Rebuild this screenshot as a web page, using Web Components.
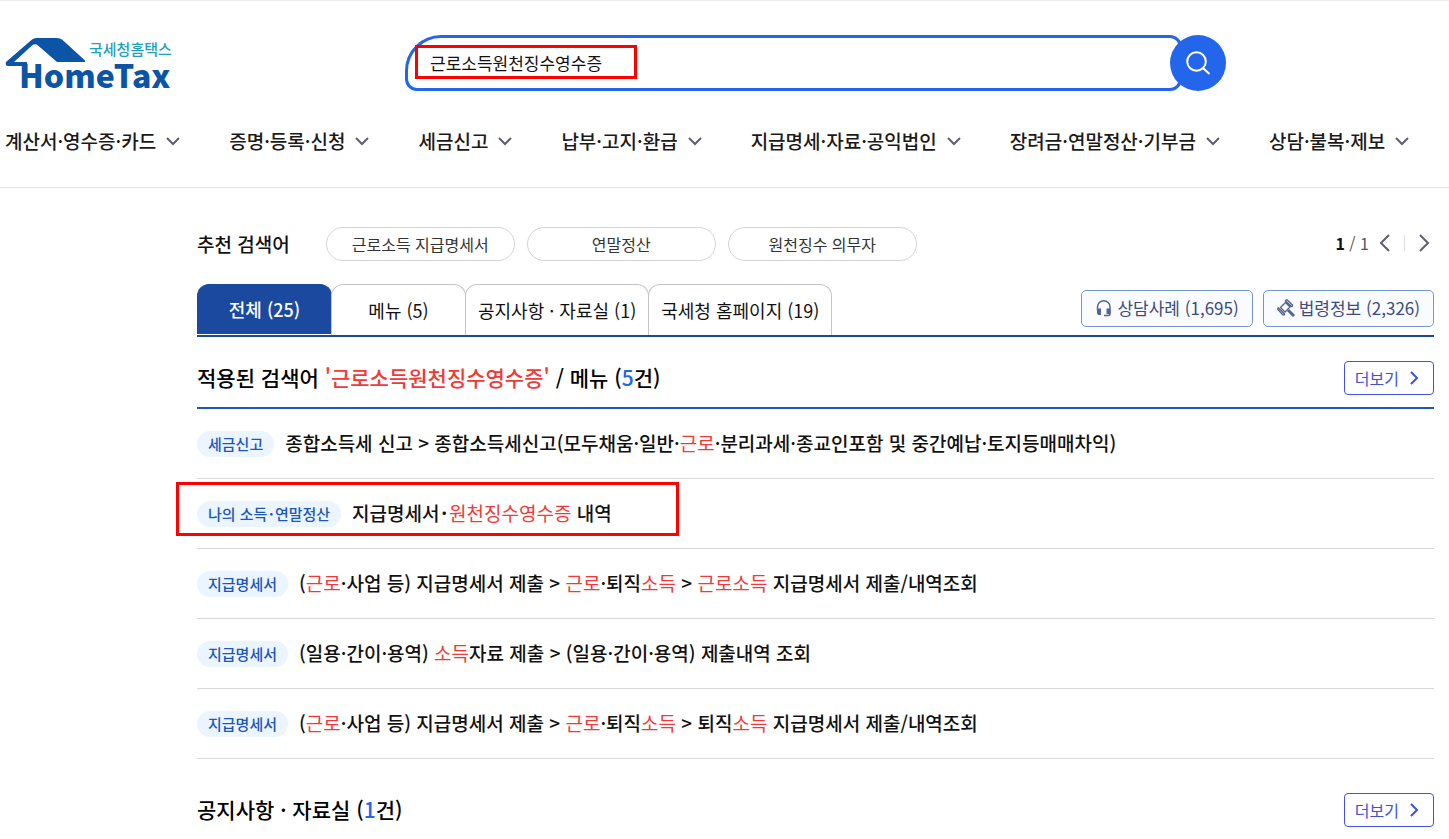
<!DOCTYPE html>
<html lang="ko">
<head>
<meta charset="utf-8">
<meta name="viewport" content="width=device-width, initial-scale=1">
<title>국세청 홈택스 - 통합검색</title>
<style>
  body {
    margin: 0;
    background: #fff;
    color: #111;
    font-family: "Noto Sans CJK KR", sans-serif;
    --blue: #2366eb;
    --navy: #1c49a0;
    --red: #f33838;
  }
</style>
</head>
<body>
<tax-header></tax-header>
<search-page></search-page>

<script>
const define = (name, html, setup) => {
  const template = document.createElement("template");
  template.innerHTML = html;

  customElements.define(name, class extends HTMLElement {
    connectedCallback() {
      if (this.shadowRoot) return;
      this.attachShadow({ mode: "open" });
      this.shadowRoot.append(template.content.cloneNode(true));
      if (setup) setup(this, this.shadowRoot);
    }
  });
};

define("tax-chevron", `
  <style>
    :host { display: inline-flex; --size: 18px; }
    :host([large]) { --size: 24px; }
    svg { display: block; width: var(--size); height: var(--size); fill: none; stroke: currentColor; stroke-width: 2; }
    path { vector-effect: non-scaling-stroke; }
    :host([dir-to="left"]) svg { transform: rotate(90deg); }
    :host([dir-to="right"]) svg { transform: rotate(-90deg); }
  </style>
  <svg viewBox="0 0 18 18" aria-hidden="true"><path d="M3 6l6 6 6-6"/></svg>
`);

define("tax-logo", `
  <style>
    :host { display: block; }
    a { display: block; }
    svg { display: block; width: 176px; height: 56px; overflow: visible; }
    .ko { font-size: 15px; font-weight: 500; fill: #1f9fbd; }
    .en { font-size: 32px; font-weight: 900; fill: #0c54a5; }
  </style>
  <a href="#" aria-label="국세청홈택스 HomeTax">
    <svg viewBox="0 0 176 56">
      <path fill="#0c54a5" d="M6 27L32 4.500Q34 3 36 3H57Q60 3 62 4.500L84.500 25Q86 27 84 27H57L38 10.500Q35 8 32 10.500L14 27H27V31H7.500Q5 30 6 27Z"/>
      <text class="ko" x="89" y="20">국세청홈택스</text>
      <text class="en" x="19" y="53">HomeTax</text>
    </svg>
  </a>
`);

define("search-box", `
  <style>
    :host { display: flex; position: relative; }
    form { display: flex; flex: 1; align-items: center; }
    input {
      box-sizing: border-box;
      flex: 1;
      min-width: 0;
      height: 56px;
      padding: 0 22px 2px;
      border: 3px solid var(--blue);
      border-radius: 36px 12px 12px 12px;
      outline: 0;
      background: #fff;
      color: #111;
      font: 400 17px/24px "Noto Sans CJK KR", sans-serif;
    }
    button {
      display: grid;
      place-items: center;
      width: 56px;
      height: 56px;
      margin-left: -12px;
      padding: 0;
      border: 0;
      border-radius: 50%;
      background: var(--blue);
    }
    svg { width: 28px; height: 28px; fill: none; stroke: #fff; stroke-width: 2; }
    .mark {
      position: absolute;
      box-sizing: border-box;
      top: 10px;
      left: 10px;
      width: 222px;
      height: 34px;
      border: 3px solid #f00;
      pointer-events: none;
    }
  </style>
  <form>
    <input type="text" aria-label="통합검색" value="근로소득원천징수영수증">
    <button type="button" aria-label="검색">
      <svg viewBox="0 0 28 28"><circle cx="12.500" cy="12.500" r="9.300"/><path d="M19 19l6.500 6"/></svg>
    </button>
  </form>
  <span class="mark"></span>
`);

define("nav-item", `
  <style>
    :host { display: block; }
    button {
      display: flex;
      align-items: center;
      gap: 8px;
      padding: 0;
      border: 0;
      background: none;
      color: #1a1a1a;
      font: 500 19px/28px "Noto Sans CJK KR", sans-serif;
      white-space: nowrap;
    }
    tax-chevron { color: #5d5f6e; }
  </style>
  <button type="button"><slot></slot><tax-chevron></tax-chevron></button>
`);

define("tax-header", `
  <style>
    :host { display: block; border-top: 1px solid #eee; border-bottom: 1px solid #e2e2e2; }
    .top {
      display: grid;
      grid-template-columns: 405px minmax(0, 821px) 1fr;
      align-items: center;
      padding-top: 34px;
    }
    nav {
      display: flex;
      gap: 47px;
      padding: 36px 5px 32px;
    }
  </style>
  <header>
    <div class="top">
      <tax-logo></tax-logo>
      <search-box></search-box>
    </div>
    <nav>
      <nav-item>계산서·영수증·카드</nav-item>
      <nav-item>증명·등록·신청</nav-item>
      <nav-item>세금신고</nav-item>
      <nav-item>납부·고지·환급</nav-item>
      <nav-item>지급명세·자료·공익법인</nav-item>
      <nav-item>장려금·연말정산·기부금</nav-item>
      <nav-item>상담·불복·제보</nav-item>
    </nav>
  </header>
`);

define("keyword-bar", `
  <style>
    :host { display: flex; align-items: center; gap: 12px; }
    h2 { margin: 0 24px 0 0; font-size: 19px; font-weight: 500; line-height: 28px; }
    .chip {
      box-sizing: border-box;
      width: 189px;
      height: 34px;
      border: 1px solid #d3d4d6;
      border-radius: 17px;
      background: #fff;
      color: #333;
      font: 400 16px/24px "Noto Sans CJK KR", sans-serif;
    }
    .pager { display: flex; align-items: center; margin: 0 -2px 2px auto; font-size: 16px; line-height: 24px; color: #555; }
    .pager b { color: #111; }
    .pager button { display: flex; padding: 0; border: 0; background: none; color: #5d5f6e; }
    .pager span { margin-right: 4px; }
    .pager i { width: 1px; height: 16px; margin: 0 7px; background: #ddd; }
  </style>
  <h2>추천 검색어</h2>
  <button class="chip" type="button">근로소득 지급명세서</button>
  <button class="chip" type="button">연말정산</button>
  <button class="chip" type="button">원천징수 의무자</button>
  <div class="pager">
    <span><b>1</b> / 1</span>
    <button type="button" aria-label="이전"><tax-chevron large dir-to="left"></tax-chevron></button>
    <i></i>
    <button type="button" aria-label="다음"><tax-chevron large dir-to="right"></tax-chevron></button>
  </div>
`);

define("result-tabs", `
  <style>
    :host { display: flex; align-items: flex-end; border-bottom: 2px solid var(--navy); }
    .tabs { display: flex; }
    .tabs button {
      box-sizing: border-box;
      min-width: 135px;
      height: 51px;
      margin-right: -1px;
      padding: 0 12px 1px;
      border: 1px solid #c4c4c4;
      border-bottom: 0;
      border-radius: 12px 12px 0 0;
      background: #fff;
      color: #111;
      font: 400 18px/28px "Noto Sans CJK KR", sans-serif;
      white-space: nowrap;
    }
    .tabs button[aria-selected="true"] {
      height: 50px;
      border-color: var(--navy);
      background: var(--navy);
      color: #fff;
      font-weight: 500;
    }
    .links { display: flex; gap: 10px; margin: 0 0 8px auto; }
    .links a {
      display: flex;
      align-items: center;
      gap: 4px;
      padding: 4px 13px 6px;
      border: 1px solid #7397cd;
      border-radius: 5px;
      background: #f9fbff;
      color: #3d4c7c;
      font-size: 17px;
      line-height: 25px;
      text-decoration: none;
      white-space: nowrap;
    }
    svg { width: 18px; height: 18px; fill: none; stroke: #536493; stroke-width: 2; }
  </style>
  <div class="tabs" role="tablist">
    <button type="button" role="tab" aria-selected="true">전체 (25)</button>
    <button type="button" role="tab">메뉴 (5)</button>
    <button type="button" role="tab">공지사항 · 자료실 (1)</button>
    <button type="button" role="tab">국세청 홈페이지 (19)</button>
  </div>
  <div class="links">
    <a href="#">
      <svg viewBox="0 0 18 18"><path d="M2.500 11V8a6 6 0 0 1 12.500 0v7q0 1.500-1.500 1.500H9" stroke-width="1.500"/><path d="M2 9.500H6V16H4Q2 16 2 14ZM11.500 9.500H15.500V15H11.500Z" fill="#536493" stroke="none"/></svg>
      상담사례 (1,695)
    </a>
    <a href="#">
      <svg viewBox="0 0 18 18"><path d="M8 1.500L10 .800L15.500 6L15 8M1 8.500L.800 10.500L6 16L8 15.500M1 8.500L8 15.500M8 1.500L15 8M3.500 8.500L8.500 3.500L13 8L8 13Z" stroke-width="1.300"/><path d="M11 11L17 17" stroke-width="3"/></svg>
      법령정보 (2,326)
    </a>
  </div>
`);

define("section-head", `
  <style>
    :host { display: flex; align-items: center; justify-content: space-between; }
    h3 { margin: 0; padding-bottom: 2px; color: #000; font-size: 21px; font-weight: 500; line-height: 32px; }
    a {
      display: flex;
      align-items: center;
      gap: 6px;
      padding: 4px 10px;
      border: 1px solid #4150df;
      border-radius: 4px;
      color: #4150df;
      font-size: 16px;
      line-height: 24px;
      text-decoration: none;
    }
  </style>
  <h3><slot></slot></h3>
  <a href="#">더보기<tax-chevron dir-to="right"></tax-chevron></a>
`);

define("result-row", `
  <style>
    :host {
      display: flex;
      position: relative;
      align-items: center;
      gap: 11px;
      padding: 19px 0 21px;
      border-bottom: 1px solid #d8d8d8;
    }
    .badge {
      margin-top: 3px;
      padding: 2px 11px;
      border-radius: 13px;
      background: #eaf5ff;
      color: #1d56bc;
      font-size: 15px;
      font-weight: 500;
      line-height: 22px;
    }
    a { color: #111; font-size: 19px; font-weight: 500; line-height: 28px; text-decoration: none; }
    .mark { display: none; }
    :host([marked]) .mark {
      display: block;
      position: absolute;
      box-sizing: border-box;
      top: 3px;
      left: -21px;
      width: 503px;
      height: 54px;
      border: 3px solid #f00;
      pointer-events: none;
    }
  </style>
  <span class="badge"></span>
  <a href="#"><slot></slot></a>
  <span class="mark"></span>
`, (host, root) => {
  root.querySelector(".badge").textContent = host.getAttribute("category");
});

define("search-page", `
  <style>
    :host { display: block; padding: 39px 15px 12px 197px; }
    result-tabs { margin-top: 23px; }
    .menu { padding: 24px 0 12px; border-bottom: 2px solid #2058bd; }
    .notice { padding-top: 34px; }
    em { color: var(--red); font-style: normal; }
    result-row em { font-weight: 400; }
    strong { color: var(--blue); font-weight: 500; }
  </style>
  <main>
    <keyword-bar></keyword-bar>
    <result-tabs></result-tabs>
    <section-head class="menu">적용된 검색어 <em>'근로소득원천징수영수증'</em> / 메뉴 (<strong>5</strong>건)</section-head>
    <result-row category="세금신고">종합소득세 신고 &gt; 종합소득세신고(모두채움·일반·<em>근로</em>·분리과세·종교인포함 및 중간예납·토지등매매차익)</result-row>
    <result-row category="나의 소득･연말정산" marked>지급명세서･<em>원천징수영수증</em> 내역</result-row>
    <result-row category="지급명세서">(<em>근로</em>·사업 등) 지급명세서 제출 &gt; <em>근로</em>·퇴직<em>소득</em> &gt; <em>근로소득</em> 지급명세서 제출/내역조회</result-row>
    <result-row category="지급명세서">(일용·간이·용역) <em>소득</em>자료 제출 &gt; (일용·간이·용역) 제출내역 조회</result-row>
    <result-row category="지급명세서">(<em>근로</em>·사업 등) 지급명세서 제출 &gt; <em>근로</em>·퇴직<em>소득</em> &gt; 퇴직<em>소득</em> 지급명세서 제출/내역조회</result-row>
    <section-head class="notice">공지사항 · 자료실 (<strong>1</strong>건)</section-head>
  </main>
`);
</script>
</body>
</html>
